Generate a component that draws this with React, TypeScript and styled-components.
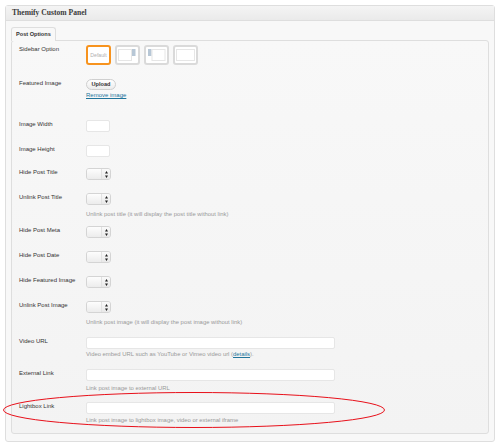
import styled, { createGlobalStyle } from 'styled-components';

const GlobalStyle = createGlobalStyle`
  body {
    margin: 0;
    background: #ffffff;
    font-family: "Liberation Sans", Arial, sans-serif;
  }
`;

type Layout = 'default' | 'right' | 'left' | 'full';

const sidebarOptions: Layout[] = ['default', 'right', 'left', 'full'];

// gap = space below the row
const toggles: { label: string; gap: number; hint?: string }[] = [
  { label: 'Hide Post Title', gap: 13 },
  { label: 'Unlink Post Title', gap: 8, hint: 'Unlink post title (it will display the post title without link)' },
  { label: 'Hide Post Meta', gap: 13 },
  { label: 'Hide Post Date', gap: 13 },
  { label: 'Hide Featured Image', gap: 13 },
  { label: 'Unlink Post Image', gap: 11, hint: 'Unlink post image (it will display the post image without link)' },
];

const LayoutIcon = ({ type }: { type: Layout }) => {
  if (type === 'default') return <Styled.DefaultText>Default</Styled.DefaultText>;
  return (
    <svg width="19" height="14" viewBox="0 0 19 14">
      {type === 'right' && (
        <>
          <rect x="0.5" y="1.5" width="13" height="11" fill="#fff" stroke="#e6e6e6" />
          <rect x="14" y="1" width="3.5" height="7" fill="#b7c7d6" />
        </>
      )}
      {type === 'left' && (
        <>
          <rect x="1" y="1" width="3.5" height="7" fill="#b7c7d6" />
          <rect x="5" y="1.5" width="13" height="11" fill="#fff" stroke="#e6e6e6" />
        </>
      )}
      {type === 'full' && <rect x="0.5" y="1.5" width="18" height="11" fill="#fff" stroke="#e6e6e6" />}
    </svg>
  );
};

const SelectBox = () => (
  <Styled.Select>
    <Styled.SelectBody />
    <Styled.SelectArrow>
      <svg width="3" height="7" viewBox="0 0 3 7">
        <path d="M1.5 0 L3 2.5 L0 2.5 Z M1.5 7 L3 4.5 L0 4.5 Z" fill="#222" />
      </svg>
    </Styled.SelectArrow>
  </Styled.Select>
);

const App = () => {
  return (
    <>
      <GlobalStyle />
      <Styled.Panel>
        <Styled.Header>Themify Custom Panel</Styled.Header>
        <Styled.Body>
          <Styled.Tabs>
            <Styled.Tab>Post Options</Styled.Tab>
          </Styled.Tabs>
          <Styled.Box>
            <Styled.Row gap={14}>
              <Styled.Label>Sidebar Option</Styled.Label>
              <Styled.Layouts>
                {sidebarOptions.map((o) => (
                  <Styled.LayoutItem key={o} selected={o === 'default'}>
                    <LayoutIcon type={o} />
                  </Styled.LayoutItem>
                ))}
              </Styled.Layouts>
            </Styled.Row>

            <Styled.Row gap={21}>
              <Styled.Label>Featured Image</Styled.Label>
              <div>
                <Styled.Button>Upload</Styled.Button>
                <Styled.Link href="#">Remove image</Styled.Link>
              </div>
            </Styled.Row>

            <Styled.Row gap={13}>
              <Styled.Label>Image Width</Styled.Label>
              <Styled.Input width={24} />
            </Styled.Row>
            <Styled.Row gap={11}>
              <Styled.Label>Image Height</Styled.Label>
              <Styled.Input width={24} />
            </Styled.Row>

            {toggles.map((t) => (
              <Styled.Row key={t.label} gap={t.gap}>
                <Styled.Label>{t.label}</Styled.Label>
                <div>
                  <SelectBox />
                  {t.hint && <Styled.Hint offset={5}>{t.hint}</Styled.Hint>}
                </div>
              </Styled.Row>
            ))}

            <Styled.Row gap={11}>
              <Styled.Label>Video URL</Styled.Label>
              <div>
                <Styled.Input width={249} />
                <Styled.Hint offset={1}>
                  Video embed URL such as YouTube or Vimeo video url (<Styled.Link href="#" inline>details</Styled.Link>).
                </Styled.Hint>
              </div>
            </Styled.Row>
            <Styled.Row gap={10}>
              <Styled.Label>External Link</Styled.Label>
              <div>
                <Styled.Input width={249} />
                <Styled.Hint offset={3}>Link post image to external URL</Styled.Hint>
              </div>
            </Styled.Row>
            <Styled.Row gap={0}>
              <Styled.Label>Lightbox Link</Styled.Label>
              <div>
                <Styled.Input width={249} />
                <Styled.Hint offset={2}>Link post image to lightbox image, video or external iframe</Styled.Hint>
              </div>
            </Styled.Row>
          </Styled.Box>
        </Styled.Body>
        <Styled.Marker width="384" height="40" viewBox="0 0 384 40">
          <ellipse cx="192" cy="19" rx="190.5" ry="17.5" fill="none" stroke="#e8101a" strokeWidth="1" />
        </Styled.Marker>
      </Styled.Panel>
    </>
  );
};

export default App;

const Styled = {
  Panel: styled.div`
    position: relative;
    margin: 5px 0 0 5px;
    width: 488px;
    border: 1px solid #dedede;
    border-radius: 3px;
    background: #f8f8f8;
  `,
  Header: styled.div`
    height: 14px;
    line-height: 14px;
    padding-left: 6px;
    border-bottom: 1px solid #dedede;
    background: linear-gradient(#f4f4f4, #eaeaea);
    font-family: "Liberation Serif", Georgia, serif;
    font-weight: bold;
    font-size: 7.6px;
    color: #3a3a3a;
  `,
  Body: styled.div`
    padding: 6px 5px 7px 5px;
  `,
  Tabs: styled.div`
    display: flex;
    height: 13px;
  `,
  Tab: styled.div`
    position: relative;
    z-index: 1;
    margin-bottom: -1px;
    padding: 0 4px;
    height: 13px;
    line-height: 13px;
    border: 1px solid #dedede;
    border-bottom: none;
    border-radius: 3px 3px 0 0;
    background: #f8f8f8;
    font-size: 5.6px;
    font-weight: bold;
    color: #333;
  `,
  Box: styled.div`
    border: 1px solid #dedede;
    border-radius: 3px;
    background: linear-gradient(#f8f8f8, #f3f3f3);
    padding: 4px 0 8px 7px;
    height: 394px;
    box-sizing: border-box;
  `,
  Row: styled.div<{ gap: number }>`
    display: grid;
    grid-template-columns: 67px 1fr;
    align-items: start;
    margin-bottom: ${(p) => p.gap}px;
  `,
  Label: styled.div`
    font-size: 6px;
    line-height: 9px;
    color: #333;
  `,
  Layouts: styled.div`
    display: flex;
    gap: 4px;
  `,
  LayoutItem: styled.div<{ selected?: boolean }>`
    width: 25px;
    height: 20px;
    box-sizing: border-box;
    border: 2px solid ${(p) => (p.selected ? '#f7931e' : '#dadada')};
    border-radius: 3px;
    background: #fff;
    display: flex;
    align-items: center;
    justify-content: center;
  `,
  DefaultText: styled.span`
    font-size: 5.2px;
    color: #b0b0b0;
  `,
  Button: styled.div`
    width: 30px;
    height: 11px;
    box-sizing: border-box;
    border: 1px solid #cfcfcf;
    border-radius: 6px;
    background: linear-gradient(#ffffff, #ececec);
    font-size: 5.6px;
    font-weight: bold;
    line-height: 9px;
    text-align: center;
    color: #333;
  `,
  Link: styled.a<{ inline?: boolean }>`
    display: ${(p) => (p.inline ? 'inline' : 'block')};
    margin-top: ${(p) => (p.inline ? 0 : 1)}px;
    font-size: ${(p) => (p.inline ? 'inherit' : '6px')};
    line-height: 8px;
    color: #21759b;
  `,
  Input: styled.div<{ width: number }>`
    width: ${(p) => p.width}px;
    height: 12px;
    box-sizing: border-box;
    border: 1px solid #e6e6e6;
    border-radius: 2px;
    background: #fff;
  `,
  Select: styled.div`
    display: flex;
    width: 25px;
    height: 12px;
    box-sizing: border-box;
    border: 1px solid #d4d4d4;
    border-radius: 3px;
    overflow: hidden;
    box-shadow: inset 0 0 1px #ddd;
  `,
  SelectBody: styled.div`
    flex: 1;
    background: linear-gradient(#fdfdfd, #ececec);
    border-right: 1px solid #e2e2e2;
  `,
  SelectArrow: styled.div`
    width: 8px;
    display: flex;
    align-items: center;
    justify-content: center;
    background: linear-gradient(#fafafa, #e8e8e8);
  `,
  Hint: styled.div<{ offset: number }>`
    margin-top: ${(p) => p.offset}px;
    font-size: 5.9px;
    line-height: 8px;
    color: #999;
  `,
  Marker: styled.svg`
    position: absolute;
    left: -4px;
    top: 385px;
    pointer-events: none;
  `,
};
